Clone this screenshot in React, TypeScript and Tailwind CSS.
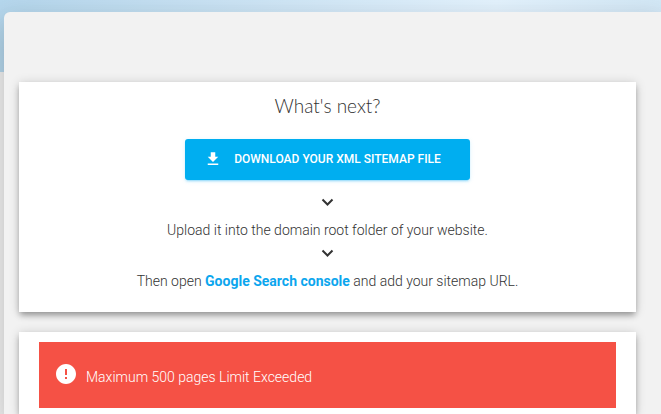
import type { ReactNode } from "react";

import { clsx } from "clsx";
import { MdError, MdFileDownload } from "react-icons/md";

function Card({ className, children }: { className?: string; children: ReactNode }) {
    return (
        <section
            className={clsx(
                "bg-white px-5 py-[10px]",
                "shadow-[0_4px_6px_-1px_rgba(0,0,0,0.32),0_1px_10px_rgba(0,0,0,0.16)]",
                className
            )}
        >
            {children}
        </section>
    )
}

function StepArrow({ className }: { className?: string }) {
    return (
        <svg viewBox="0 0 20 20" aria-hidden="true" className={clsx("size-5", className)}>
            <path d="M4.5 7.5 L9.5 12.5 L14.5 7.5" fill="none" stroke="currentColor" strokeWidth="2" />
        </svg>
    )
}

function NextSteps() {
    return (
        <Card className="flex flex-col items-center pb-[21px] text-center">
            <h2 className="font-[Lato,sans-serif] text-[19px] leading-7 font-light">What's next?</h2>

            <button
                type="button"
                className={clsx(
                    "mt-[19px] flex h-[41px] items-center gap-3 rounded-[3px] bg-[#00aef0] pr-[29px] pb-[2px] pl-[19px]",
                    "text-xs font-medium text-white uppercase",
                    "shadow-[0_2px_2px_rgba(3,169,244,0.14),0_3px_1px_-2px_rgba(3,169,244,0.2),0_1px_5px_rgba(3,169,244,0.12)]"
                )}
            >
                <MdFileDownload className="size-[18px]" />
                Download your XML sitemap file
            </button>

            <StepArrow className="mt-3" />
            <p className="mt-2 leading-5">Upload it into the domain root folder of your website.</p>

            <StepArrow className="mt-[3px]" />
            <p className="mt-2 leading-5">
                Then open{" "}
                <a href="#search-console" className="font-bold text-[#0ca6ee]">Google Search console</a>
                {" "}and add your sitemap URL.
            </p>
        </Card>
    )
}

export default function App() {
    return (
        <div className="flex min-h-screen flex-col overflow-hidden bg-[#f2f2f2] font-[Roboto,sans-serif] text-sm font-light">
            <header className="h-[72px] shrink-0 bg-linear-to-r from-[#b6d8ee] via-[#e5f4ff] via-75% to-[#d4e9f7]" />

            <main
                className={clsx(
                    "-mt-[60px] ml-1 flex grow flex-col gap-5 rounded-tl-md bg-[#f2f2f2] pt-[70px] pr-[25px] pl-[15px] text-[#333]",
                    "shadow-[0_16px_24px_2px_rgba(0,0,0,0.1),0_6px_30px_5px_rgba(0,0,0,0.1)]"
                )}
            >
                <NextSteps />

                <Card className="grow pb-1">
                    <div role="alert" className="flex h-[66px] items-center gap-2 bg-[#f55145] px-[15px] text-white">
                        <MdError className="mb-[2px] size-6" />
                        <span className="pt-1">Maximum 500 pages Limit Exceeded</span>
                    </div>
                </Card>
            </main>
        </div>
    )
}
